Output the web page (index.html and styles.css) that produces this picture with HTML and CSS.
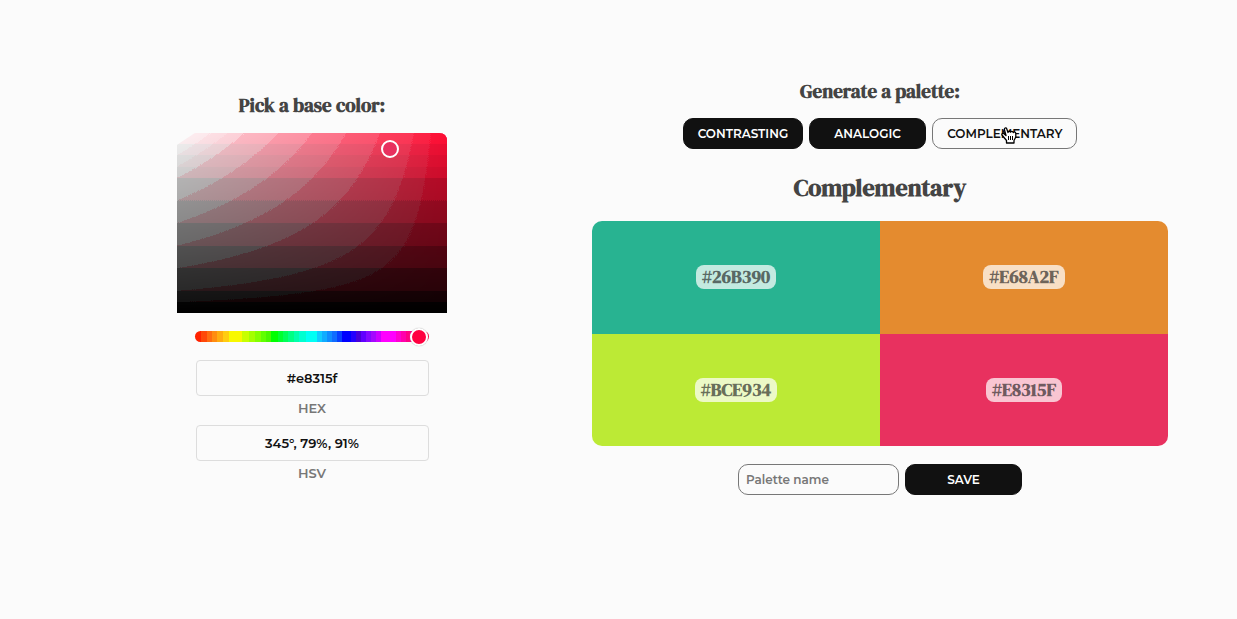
FILE: index.html
```html
<!DOCTYPE html>
<html lang="en">
<head>
<meta charset="utf-8">
<meta name="viewport" content="width=device-width, initial-scale=1">
<title>Palette generator</title>
<link rel="stylesheet" href="styles.css">
</head>
<body>
<main class="page">
  <section class="picker">
    <h2 class="heading">Pick a base color:</h2>
    <div class="shade">
      <svg class="shade-map" viewBox="0 0 270 180" preserveAspectRatio="none" aria-hidden="true">
        <defs>
          <linearGradient id="sat"><stop offset="0" stop-color="#fff"/><stop offset="1" stop-color="#ff0040"/></linearGradient>
          <linearGradient id="val" x2="0" y2="1"><stop offset="0" stop-opacity="0"/><stop offset="1"/></linearGradient>
          <filter id="bands" x="0" y="0" width="1" height="1" color-interpolation-filters="sRGB">
            <feComponentTransfer>
              <feFuncR type="discrete" tableValues="0 .08 .18 .18 .3 .3 .43 .43 .56 .56 .69 .69 .82 .87 .92 .99"/>
              <feFuncG type="discrete" tableValues="0 .08 .18 .18 .3 .3 .43 .43 .56 .56 .69 .69 .82 .87 .92 .99"/>
            </feComponentTransfer>
            <feColorMatrix values="1 0 0 0 0  .08 .92 0 0 0  .2 .8 0 0 0  0 0 0 1 0"/>
          </filter>
          <clipPath id="edge"><path d="M0 12 18 0H262Q270 0 270 8V180H0Z"/></clipPath>
        </defs>
        <g clip-path="url(#edge)">
          <rect width="270" height="180" fill="url(#sat)"/>
          <rect width="270" height="180" fill="url(#val)"/>
          <g filter="url(#bands)" opacity=".75">
            <rect width="270" height="180" fill="url(#sat)"/>
            <rect width="270" height="180" fill="url(#val)"/>
          </g>
        </g>
      </svg>
      <span class="shade-pin"></span>
    </div>
    <input class="hue" type="range" min="0" max="360" value="358" aria-label="Hue">
    <div class="fields">
      <div class="field">
        <input class="field-input" id="hex" type="text" value="#e8315f">
        <label class="field-label" for="hex">HEX</label>
      </div>
      <div class="field">
        <input class="field-input" id="hsv" type="text" value="345°, 79%, 91%">
        <label class="field-label" for="hsv">HSV</label>
      </div>
    </div>
  </section>

  <section class="generator">
    <h2 class="heading">Generate a palette:</h2>
    <div class="modes">
      <button class="button" type="button">CONTRASTING</button>
      <button class="button" type="button">ANALOGIC</button>
      <button class="button button-active" type="button">COMPLEMENTARY
        <svg class="pointer" viewBox="0 0 16 18" aria-hidden="true"><path d="M5.500 17V14.500L3 11.500 1 9C.5 7.500 2 7 3 7.700L5 9.500 3.500 4C3 2 5 1 5.700 2.700L7 6.500C7 5 9 4.800 9.500 6.200 10 5 12 5 12.200 6.500 13 5.500 14.800 6 14.800 7.500V11L13 14.500V17Z" fill="#fff" stroke="#000" stroke-width="1.300" stroke-linejoin="round"/><path d="M7.500 10v4M9.500 10v4M11.500 10v4" stroke="#000"/></svg>
      </button>
    </div>
    <h1 class="title">Complementary</h1>
    <div class="palette">
      <div class="swatch swatch-teal"><span class="code">#26B390</span></div>
      <div class="swatch swatch-orange"><span class="code">#E68A2F</span></div>
      <div class="swatch swatch-lime"><span class="code">#BCE934</span></div>
      <div class="swatch swatch-pink"><span class="code">#E8315F</span></div>
    </div>
    <form class="save">
      <input class="name" type="text" placeholder="Palette name" aria-label="Palette name">
      <button class="button" type="button">SAVE</button>
    </form>
  </section>
</main>
</body>
</html>
```
FILE: styles.css
```css
* { box-sizing: border-box; }

body {
  margin: 0;
  background: #fbfbfb;
  color: #111;
  font: 600 12px/16px Montserrat, Inter, sans-serif;
}

button, input { font: inherit; color: inherit; }

.page {
  display: grid;
  grid-template-columns: 8fr 9fr;
  gap: 24px;
  align-items: center;
  padding: 79px 69px 0 56px;
}

.picker, .generator {
  display: flex;
  flex-direction: column;
  align-items: center;
}

.heading, .title {
  margin: 0;
  color: #444;
  font-family: "DM Serif Display", "Liberation Serif", serif;
  font-weight: 700;
}
.heading { font-size: 19px; line-height: 24px; }
.title { margin: 23px 0 17px; font-size: 24px; line-height: 32px; }

.shade { position: relative; width: 270px; margin-top: 16px; }
.shade-map { display: block; width: 100%; height: 180px; }
.shade-pin {
  position: absolute;
  left: 204px;
  top: 7px;
  width: 18px;
  height: 18px;
  border: 2px solid #fff;
  border-radius: 50%;
  background: #e8315f;
}

.hue {
  appearance: none;
  width: 234px;
  height: 11px;
  margin: 18px 0;
  border-radius: 6px;
  background: linear-gradient(90deg,
    #ff2200 0 6px, #ff4808 0 12px, #ff6c10 0 17px, #ff8c10 0 22px, #ffac10 0 28px, #ffcc10 0 34px,
    #f8f800 0 47px, #c8ff00 0 54px, #a4ff00 0 60px, #84ff00 0 66px, #60ff00 0 71px, #48f800 0 76px,
    #00ff00 0 83px, #00ff30 0 88px, #00ff58 0 93px, #00ff84 0 99px, #00ffac 0 104px, #00ffd0 0 111px,
    #00fff4 0 122px, #10ccff 0 127px, #10acff 0 132px, #108cff 0 137px, #106cff 0 142px, #0840ff 0 147px,
    #0000ff 0 156px, #2400ff 0 161px, #4800d8 0 166px, #6000ff 0 171px, #8408ff 0 176px, #a408ff 0 181px,
    #cc00ff 0 186px, #ff00ff 0 201px, #ff00d0 0 206px, #ff00ac 0 211px, #ff0084 0 218px, #ff0040 0);
}
.hue::-webkit-slider-thumb {
  appearance: none;
  width: 18px;
  height: 18px;
  border: 2px solid #fff;
  border-radius: 50%;
  background: #ff0040;
  box-shadow: 0 0 1px #999;
}

.fields { display: grid; gap: 9px; width: 233px; font-size: 13px; }
.field { display: grid; gap: 4px; text-align: center; }
.field-input {
  width: 100%;
  height: 36px;
  border: 1px solid #ddd;
  border-radius: 4px;
  background: transparent;
  text-align: center;
}
.field-label { color: #777; }

.modes, .save { display: flex; justify-content: center; gap: 6px; }
.modes { margin-top: 15px; }
.save { margin-top: 18px; }

.button {
  position: relative;
  min-width: 117px;
  height: 31px;
  padding: 0 14px;
  border: 1px solid #111;
  border-radius: 10px;
  background: #111;
  color: #fff;
}
.button-active { border-color: #777; background: transparent; color: #111; }
.pointer { position: absolute; left: 68px; top: 7px; width: 16px; height: 18px; fill: none; }

.palette {
  display: grid;
  grid-template-columns: 1fr 1fr;
  width: 100%;
  min-height: 225px;
  overflow: hidden;
  border-radius: 10px;
}
.swatch { display: grid; place-items: center; padding: 44px 0; }
.swatch-teal { background: #28b391; }
.swatch-orange { background: #e48b2f; }
.swatch-lime { background: #bcea35; }
.swatch-pink { background: #e8315f; }
.code {
  padding: 0 6px;
  border-radius: 8px;
  background: rgb(255 255 255 / 72%);
  color: rgb(17 17 17 / 62%);
  font: 700 18px/24px "DM Serif Display", "Liberation Serif", serif;
}

.name {
  width: 161px;
  height: 31px;
  padding: 0 7px;
  border: 1px solid #777;
  border-radius: 10px;
  background: transparent;
}
.name::placeholder { color: #777; }
```
